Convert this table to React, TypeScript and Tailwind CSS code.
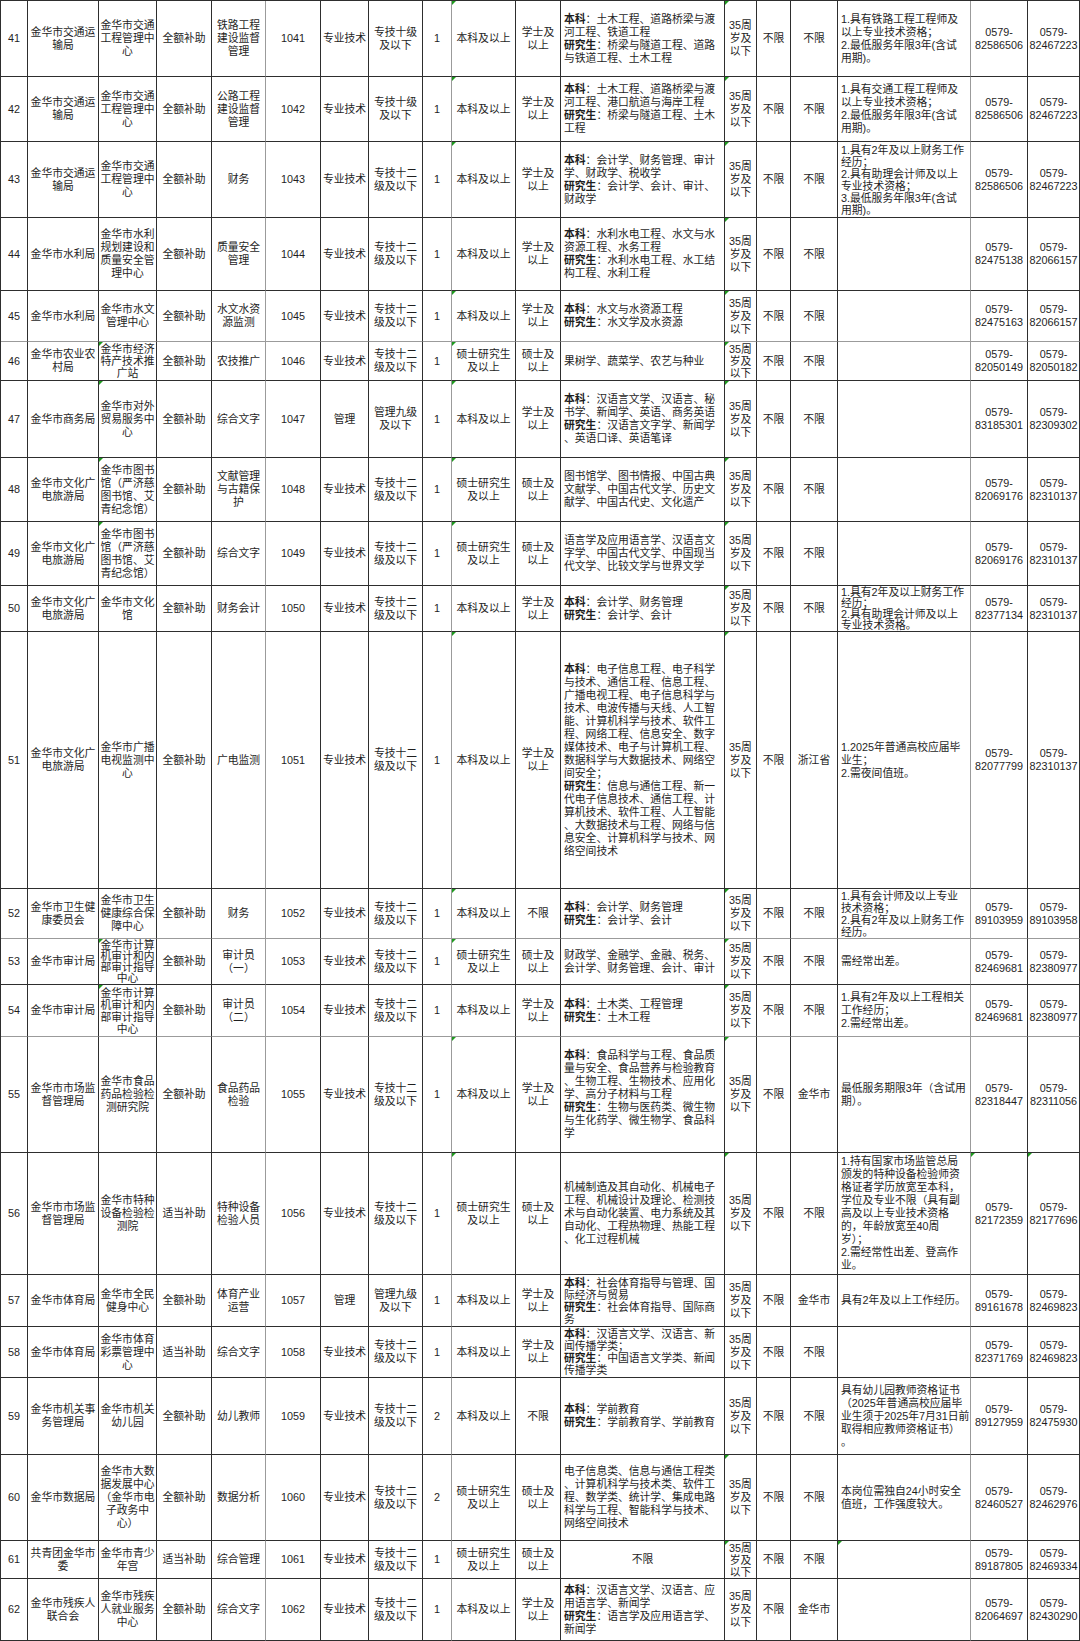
import clsx from 'clsx';

const GRID =
  'grid grid-cols-[27px_71px_58px_55px_54px_55px_48px_54px_29px_64px_45px_164px_32px_34px_47px_133px_57px_52px]';

const AGE = '35周|岁及|以下';
const ZJ12 = '专技十二|级及以下';
const BK = '本科及以上';
const SS = '硕士研究生|及以上';
const XS = '学士及|以上';
const SX = '硕士及|以上';
const tel = (n: string) => '0579-|' + n;

type Row = { h: string; hp: number; c: string[]; tri?: number[]; soft?: boolean };

const rows: Row[] = [
  {
    h: 'h-[76px]',
    hp: 76,
    tri: [9, 12],
    c: ['41', '金华市交通运|输局', '金华市交通|工程管理中|心', '全额补助', '铁路工程|建设监督|管理', '1041', '专业技术', '专技十级|及以下', '1', BK, XS,
      '本科：土木工程、道路桥梁与渡|河工程、铁道工程|研究生：桥梁与隧道工程、道路|与铁道工程、土木工程',
      AGE, '不限', '不限', '1.具有铁路工程工程师及|以上专业技术资格；|2.最低服务年限3年(含试|用期)。', tel('82586506'), tel('82467223')],
  },
  {
    h: 'h-[65px]',
    hp: 65,
    tri: [9, 12],
    c: ['42', '金华市交通运|输局', '金华市交通|工程管理中|心', '全额补助', '公路工程|建设监督|管理', '1042', '专业技术', '专技十级|及以下', '1', BK, XS,
      '本科：土木工程、道路桥梁与渡|河工程、港口航道与海岸工程|研究生：桥梁与隧道工程、土木|工程',
      AGE, '不限', '不限', '1.具有交通工程工程师及|以上专业技术资格；|2.最低服务年限3年(含试|用期)。', tel('82586506'), tel('82467223')],
  },
  {
    h: 'h-[76px]',
    hp: 76,
    tri: [9, 12],
    c: ['43', '金华市交通运|输局', '金华市交通|工程管理中|心', '全额补助', '财务', '1043', '专业技术', ZJ12, '1', BK, XS,
      '本科：会计学、财务管理、审计|学、财政学、税收学|研究生：会计学、会计、审计、|财政学',
      AGE, '不限', '不限', '1.具有2年及以上财务工作|经历；|2.具有助理会计师及以上|专业技术资格；|3.最低服务年限3年(含试|用期)。', tel('82586506'), tel('82467223')],
  },
  {
    h: 'h-[73px]',
    hp: 73,
    tri: [12],
    c: ['44', '金华市水利局', '金华市水利|规划建设和|质量安全管|理中心', '全额补助', '质量安全|管理', '1044', '专业技术', ZJ12, '1', BK, XS,
      '本科：水利水电工程、水文与水|资源工程、水务工程|研究生：水利水电工程、水工结|构工程、水利工程',
      AGE, '不限', '不限', '', tel('82475138'), tel('82066157')],
  },
  {
    h: 'h-[51px]',
    hp: 51,
    tri: [9, 12],
    soft: true,
    c: ['45', '金华市水利局', '金华市水文|管理中心', '全额补助', '水文水资|源监测', '1045', '专业技术', ZJ12, '1', BK, XS,
      '本科：水文与水资源工程|研究生：水文学及水资源',
      AGE, '不限', '不限', '', tel('82475163'), tel('82066157')],
  },
  {
    h: 'h-[39px]',
    hp: 39,
    tri: [2, 9, 12],
    c: ['46', '金华市农业农|村局', '金华市经济|特产技术推|广站', '全额补助', '农技推广', '1046', '专业技术', ZJ12, '1', SS, SX,
      '果树学、蔬菜学、农艺与种业',
      AGE, '不限', '不限', '', tel('82050149'), tel('82050182')],
  },
  {
    h: 'h-[77px]',
    hp: 77,
    tri: [2, 9, 12],
    c: ['47', '金华市商务局', '金华市对外|贸易服务中|心', '全额补助', '综合文字', '1047', '管理', '管理九级|及以下', '1', BK, XS,
      '本科：汉语言文学、汉语言、秘|书学、新闻学、英语、商务英语|研究生：汉语言文字学、新闻学|、英语口译、英语笔译',
      AGE, '不限', '不限', '', tel('83185301'), tel('82309302')],
  },
  {
    h: 'h-[64px]',
    hp: 64,
    tri: [2, 9, 12],
    c: ['48', '金华市文化广|电旅游局', '金华市图书|馆（严济慈|图书馆、艾|青纪念馆）', '全额补助', '文献管理|与古籍保|护', '1048', '专业技术', ZJ12, '1', SS, SX,
      '图书馆学、图书情报、中国古典|文献学、中国古代文学、历史文|献学、中国古代史、文化遗产',
      AGE, '不限', '不限', '', tel('82069176'), tel('82310137')],
  },
  {
    h: 'h-[64px]',
    hp: 64,
    tri: [2, 9, 12],
    c: ['49', '金华市文化广|电旅游局', '金华市图书|馆（严济慈|图书馆、艾|青纪念馆）', '全额补助', '综合文字', '1049', '专业技术', ZJ12, '1', SS, SX,
      '语言学及应用语言学、汉语言文|字学、中国古代文学、中国现当|代文学、比较文学与世界文学',
      AGE, '不限', '不限', '', tel('82069176'), tel('82310137')],
  },
  {
    h: 'h-[46px]',
    hp: 46,
    tri: [12],
    c: ['50', '金华市文化广|电旅游局', '金华市文化|馆', '全额补助', '财务会计', '1050', '专业技术', ZJ12, '1', BK, XS,
      '本科：会计学、财务管理|研究生：会计学、会计',
      AGE, '不限', '不限', '1.具有2年及以上财务工作|经历；|2.具有助理会计师及以上|专业技术资格。', tel('82377134'), tel('82310137')],
  },
  {
    h: 'h-[257px]',
    hp: 257,
    tri: [9, 12],
    c: ['51', '金华市文化广|电旅游局', '金华市广播|电视监测中|心', '全额补助', '广电监测', '1051', '专业技术', ZJ12, '1', BK, XS,
      '本科：电子信息工程、电子科学|与技术、通信工程、信息工程、|广播电视工程、电子信息科学与|技术、电波传播与天线、人工智|能、计算机科学与技术、软件工|程、网络工程、信息安全、数字|媒体技术、电子与计算机工程、|数据科学与大数据技术、网络空|间安全；|研究生：信息与通信工程、新一|代电子信息技术、通信工程、计|算机技术、软件工程、人工智能|、大数据技术与工程、网络与信|息安全、计算机科学与技术、网|络空间技术',
      AGE, '不限', '浙江省', '1.2025年普通高校应届毕|业生；|2.需夜间值班。', tel('82077799'), tel('82310137')],
  },
  {
    h: 'h-[50px]',
    hp: 50,
    tri: [9, 12],
    soft: true,
    c: ['52', '金华市卫生健|康委员会', '金华市卫生|健康综合保|障中心', '全额补助', '财务', '1052', '专业技术', ZJ12, '1', BK, '不限',
      '本科：会计学、财务管理|研究生：会计学、会计',
      AGE, '不限', '不限', '1.具有会计师及以上专业|技术资格；|2.具有2年及以上财务工作|经历。', tel('89103959'), tel('89103958')],
  },
  {
    h: 'h-[46px]',
    hp: 46,
    tri: [2, 9, 12],
    c: ['53', '金华市审计局', '金华市计算|机审计和内|部审计指导|中心', '全额补助', '审计员|（一）', '1053', '专业技术', ZJ12, '1', SS, SX,
      '财政学、金融学、金融、税务、|会计学、财务管理、会计、审计',
      AGE, '不限', '不限', '需经常出差。', tel('82469681'), tel('82380977')],
  },
  {
    h: 'h-[52px]',
    hp: 52,
    tri: [2, 12],
    soft: true,
    c: ['54', '金华市审计局', '金华市计算|机审计和内|部审计指导|中心', '全额补助', '审计员|（二）', '1054', '专业技术', ZJ12, '1', BK, XS,
      '本科：土木类、工程管理|研究生：土木工程',
      AGE, '不限', '不限', '1.具有2年及以上工程相关|工作经历；|2.需经常出差。', tel('82469681'), tel('82380977')],
  },
  {
    h: 'h-[116px]',
    hp: 116,
    tri: [9, 12],
    c: ['55', '金华市市场监|督管理局', '金华市食品|药品检验检|测研究院', '全额补助', '食品药品|检验', '1055', '专业技术', ZJ12, '1', BK, XS,
      '本科：食品科学与工程、食品质|量与安全、食品营养与检验教育|、生物工程、生物技术、应用化|学、高分子材料与工程|研究生：生物与医药类、微生物|与生化药学、微生物学、食品科|学',
      AGE, '不限', '金华市', '最低服务期限3年（含试用|期）。', tel('82318447'), tel('82311056')],
  },
  {
    h: 'h-[122px]',
    hp: 122,
    tri: [9, 12, 16, 17],
    c: ['56', '金华市市场监|督管理局', '金华市特种|设备检验检|测院', '适当补助', '特种设备|检验人员', '1056', '专业技术', ZJ12, '1', SS, SX,
      '机械制造及其自动化、机械电子|工程、机械设计及理论、检测技|术与自动化装置、电力系统及其|自动化、工程热物理、热能工程|、化工过程机械',
      AGE, '不限', '不限', '1.持有国家市场监管总局|颁发的特种设备检验师资|格证者学历放宽至本科，|学位及专业不限（具有副|高及以上专业技术资格|的，年龄放宽至40周|岁）；|2.需经常性出差、登高作|业。', tel('82172359'), tel('82177696')],
  },
  {
    h: 'h-[52px]',
    hp: 52,
    c: ['57', '金华市体育局', '金华市全民|健身中心', '全额补助', '体育产业|运营', '1057', '管理', '管理九级|及以下', '1', BK, XS,
      '本科：社会体育指导与管理、国|际经济与贸易|研究生：社会体育指导、国际商|务',
      AGE, '不限', '金华市', '具有2年及以上工作经历。', tel('89161678'), tel('82469823')],
  },
  {
    h: 'h-[51px]',
    hp: 51,
    c: ['58', '金华市体育局', '金华市体育|彩票管理中|心', '适当补助', '综合文字', '1058', '专业技术', ZJ12, '1', BK, XS,
      '本科：汉语言文学、汉语言、新|闻传播学类；|研究生：中国语言文学类、新闻|传播学类',
      AGE, '不限', '不限', '', tel('82371769'), tel('82469823')],
  },
  {
    h: 'h-[77px]',
    hp: 77,
    c: ['59', '金华市机关事|务管理局', '金华市机关|幼儿园', '全额补助', '幼儿教师', '1059', '专业技术', ZJ12, '2', BK, '不限',
      '本科：学前教育|研究生：学前教育学、学前教育',
      AGE, '不限', '不限', '具有幼儿园教师资格证书|（2025年普通高校应届毕|业生须于2025年7月31日前|取得相应教师资格证书）|。', tel('89127959'), tel('82475930')],
  },
  {
    h: 'h-[86px]',
    hp: 86,
    tri: [12],
    c: ['60', '金华市数据局', '金华市大数|据发展中心|（金华市电|子政务中|心）', '全额补助', '数据分析', '1060', '专业技术', ZJ12, '2', SS, SX,
      '电子信息类、信息与通信工程类|、计算机科学与技术类、软件工|程、数学类、统计学、集成电路|科学与工程、智能科学与技术、|网络空间技术',
      AGE, '不限', '不限', '本岗位需独自24小时安全|值班，工作强度较大。', tel('82460527'), tel('82462976')],
  },
  {
    h: 'h-[38px]',
    hp: 38,
    tri: [12, 15],
    c: ['61', '共青团金华市|委', '金华市青少|年宫', '适当补助', '综合管理', '1061', '专业技术', ZJ12, '1', SS, SX,
      '不限',
      AGE, '不限', '不限', '', tel('89187805'), tel('82469334')],
  },
  {
    h: 'h-[62px]',
    hp: 62,
    c: ['62', '金华市残疾人|联合会', '金华市残疾|人就业服务|中心', '全额补助', '综合文字', '1062', '专业技术', ZJ12, '1', BK, XS,
      '本科：汉语言文学、汉语言、应|用语言学、新闻学|研究生：语言学及应用语言学、|新闻学',
      AGE, '不限', '金华市', '', tel('82064697'), tel('82430290')],
  },
];

// tighten the line pitch only where the lines would not fit the row
function leadingFor(lines: number, hp: number) {
  if (lines * 13 <= hp - 1) return 'leading-[13px]';
  if (lines * 12 <= hp - 1) return 'leading-[12px]';
  return 'leading-[11px]';
}

function Line({ text }: { text: string }) {
  const m = text.match(/^(本科|研究生)(：.*)$/);
  if (m) {
    return (
      <div>
        <span className="font-bold">{m[1]}</span>
        {m[2]}
      </div>
    );
  }
  return <div>{text}</div>;
}

function Cell({ text, col, row }: { text: string; col: number; row: Row }) {
  const left = (col === 11 || col === 15) && text !== '不限';
  const softRight = col === 4 || col === 8 || col === 15;
  const lines = text ? text.split('|') : [];
  return (
    <div
      className={clsx(
        'relative flex items-center overflow-hidden border-r border-b',
        softRight ? 'border-r-[#9b9b9b]' : 'border-r-[#2e2e2e]',
        row.soft ? 'border-b-[#9b9b9b]' : 'border-b-[#2e2e2e]',
        left ? 'justify-start pl-[3px] text-left' : 'justify-center text-center'
      )}
    >
      {row.tri?.includes(col) && (
        <span className="absolute left-0 top-0 h-0 w-0 border-t-[4px] border-r-[4px] border-t-[#1f9a1f] border-r-transparent" />
      )}
      {lines.length > 0 && (
        <div className={clsx('whitespace-nowrap', leadingFor(lines.length, row.hp))}>
          {lines.map((l, i) => (
            <Line key={i} text={l} />
          ))}
        </div>
      )}
    </div>
  );
}

export default function App() {
  return (
    <div className="h-[1641px] w-[1080px] overflow-hidden bg-white font-['Liberation_Sans','Noto_Sans_CJK_SC',sans-serif] text-[10.8px] text-[#1e1e1e]">
      <div className="border-l border-t border-[#2e2e2e]">
        {rows.map((row) => (
          <div key={row.c[0]} className={clsx(GRID, row.h)}>
            {row.c.map((text, col) => (
              <Cell key={col} text={text} col={col} row={row} />
            ))}
          </div>
        ))}
      </div>
    </div>
  );
}
